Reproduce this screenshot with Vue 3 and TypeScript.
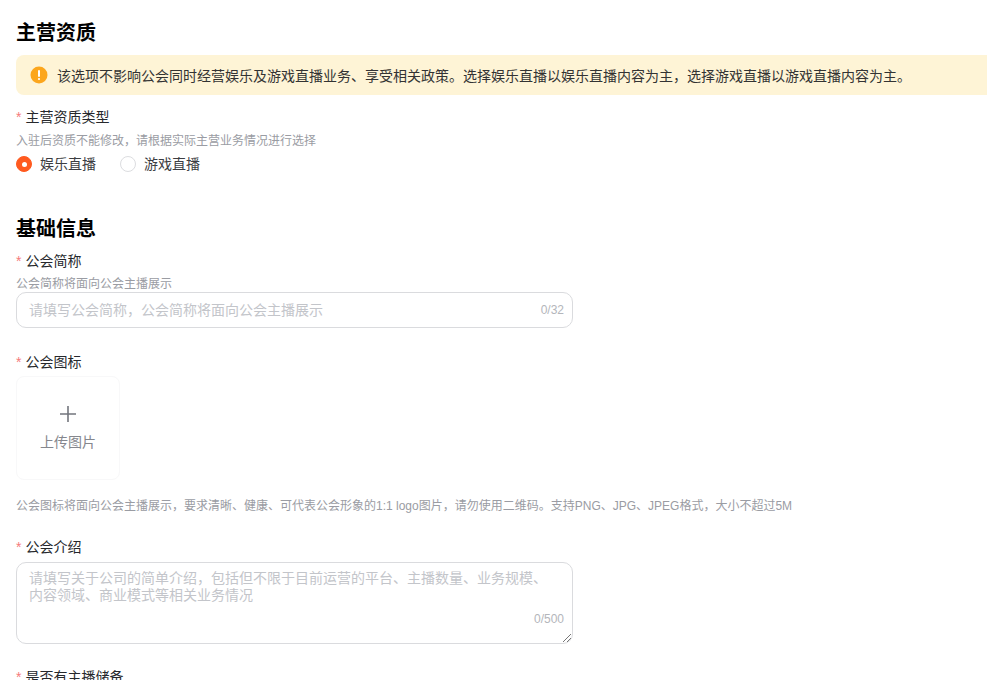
<script setup lang="ts">
const fields = { name: '请填写公会简称\uFF0C公会简称将面向公会主播展示' }
</script>

<template>
  <div class="page">
    <h2 class="title first">主营资质</h2>
    <div class="notice">
      <svg class="notice-icon" width="18" height="18" viewBox="0 0 18 18">
        <circle cx="9" cy="9" r="8.5" fill="#fca61c" />
        <rect x="8" y="4" width="2" height="7" rx="1" fill="#fff" />
        <circle cx="9" cy="13" r="1.1" fill="#fff" />
      </svg>
      <span>该选项不影响公会同时经营娱乐及游戏直播业务、享受相关政策。选择娱乐直播以娱乐直播内容为主&#xFF0C;选择游戏直播以游戏直播内容为主。</span>
    </div>
    <div class="label qual-label"><i>*</i>主营资质类型</div>
    <div class="hint qual-hint">入驻后资质不能修改&#xFF0C;请根据实际主营业务情况进行选择</div>
    <div class="radios">
      <label class="radio"><span class="dot on"></span>娱乐直播</label>
      <label class="radio"><span class="dot"></span>游戏直播</label>
    </div>

    <h2 class="title second">基础信息</h2>
    <div class="label name-label"><i>*</i>公会简称</div>
    <div class="hint name-hint">公会简称将面向公会主播展示</div>
    <div class="input">
      <span class="ph">{{ fields.name }}</span>
      <span class="count">0/32</span>
    </div>

    <div class="label logo-label"><i>*</i>公会图标</div>
    <div class="upload">
      <svg width="18" height="18" viewBox="0 0 18 18">
        <path d="M9 1v16M1 9h16" stroke="#73767d" stroke-width="1.6" fill="none" />
      </svg>
      <span>上传图片</span>
    </div>
    <div class="hint logo-hint">公会图标将面向公会主播展示&#xFF0C;要求清晰、健康、可代表公会形象的1:1 logo图片&#xFF0C;请勿使用二维码。支持PNG、JPG、JPEG格式&#xFF0C;大小不超过5M</div>

    <div class="label intro-label"><i>*</i>公会介绍</div>
    <div class="area">
      <div class="ph">请填写关于公司的简单介绍&#xFF0C;包括但不限于目前运营的平台、主播数量、业务规模、<br />内容领域、商业模式等相关业务情况</div>
      <span class="count">0/500</span>
      <svg class="grip" width="10" height="10" viewBox="0 0 10 10">
        <path d="M1 9 9 1M5 9 9 5" stroke="#777" stroke-width="1" fill="none" />
      </svg>
    </div>

    <div class="label last-label"><i>*</i>是否有主播储备</div>
  </div>
</template>

<style>
html, body { margin: 0; background: #fff; overflow: hidden; }
</style>

<style scoped>
.page {
  width: 987px;
  height: 680px;
  overflow: hidden;
  box-sizing: border-box;
  padding-left: 16px;
  font-family: "Liberation Sans", "Noto Sans CJK SC", sans-serif;
  color: #222;
}
.title {
  margin: 0;
  font-size: 20px;
  line-height: 28px;
  font-weight: 700;
  color: #000;
}
.first { padding-top: 19px; }
.second { margin-top: 42px; }
.notice {
  margin-top: 8px;
  width: 1000px;
  height: 40px;
  box-sizing: border-box;
  padding-left: 14px;
  display: flex;
  align-items: center;
  gap: 9px;
  background: #fef4d6;
  border-radius: 8px;
  font-size: 14px;
  color: #333;
  white-space: nowrap;
}
.notice-icon { flex: none; }
.label {
  font-size: 14px;
  line-height: 18px;
  color: #26282c;
}
.label i {
  font-style: normal;
  color: #f57a7a;
  margin-right: 4px;
}
.qual-label { margin-top: 13px; }
.name-label { margin-top: 9px; }
.hint {
  margin-top: 5px;
  font-size: 12px;
  line-height: 16px;
  color: #9a9ca3;
  white-space: nowrap;
}
.qual-hint { margin-top: 7px; }
.name-hint { margin-top: 6px; }
.radios {
  display: flex;
  gap: 24px;
  margin-top: 4px;
  height: 20px;
}
.radio {
  display: flex;
  align-items: center;
  gap: 8px;
  font-size: 14px;
  color: #3c3d42;
}
.dot {
  width: 16px;
  height: 16px;
  margin-top: 2px;
  box-sizing: border-box;
  border: 1px solid #dcdde0;
  border-radius: 50%;
  display: flex;
  align-items: center;
  justify-content: center;
}
.dot.on { background: #ff5a1f; border-color: #ff5a1f; }
.dot.on::after {
  content: "";
  width: 5px;
  height: 5px;
  border-radius: 50%;
  background: #fff;
}
.input {
  margin-top: 0;
  width: 557px;
  height: 36px;
  box-sizing: border-box;
  border: 1px solid #dadbde;
  border-radius: 10px;
  display: flex;
  align-items: center;
  justify-content: space-between;
  padding: 0 8px 0 12px;
}
.ph { font-size: 14px; color: #c3c5ca; line-height: 17px; }
.count { font-size: 12px; color: #b4b6bb; }
.logo-label { margin-top: 25px; }
.upload {
  margin-top: 5px;
  width: 104px;
  height: 104px;
  box-sizing: border-box;
  border: 1px solid #f8f8f9;
  border-radius: 8px;
  display: flex;
  flex-direction: column;
  align-items: center;
  justify-content: center;
  gap: 8px;
  font-size: 14px;
  color: #85878d;
}
.logo-hint { margin-top: 18px; }
.intro-label { margin-top: 24px; }
.area {
  position: relative;
  margin-top: 6px;
  width: 557px;
  height: 82px;
  box-sizing: border-box;
  border: 1px solid #dadbde;
  border-radius: 10px;
  padding: 7px 12px;
}
.area .count { position: absolute; right: 8px; bottom: 17px; }
.grip { position: absolute; right: 0; bottom: 0; }
.last-label { margin-top: 24px; }
</style>
